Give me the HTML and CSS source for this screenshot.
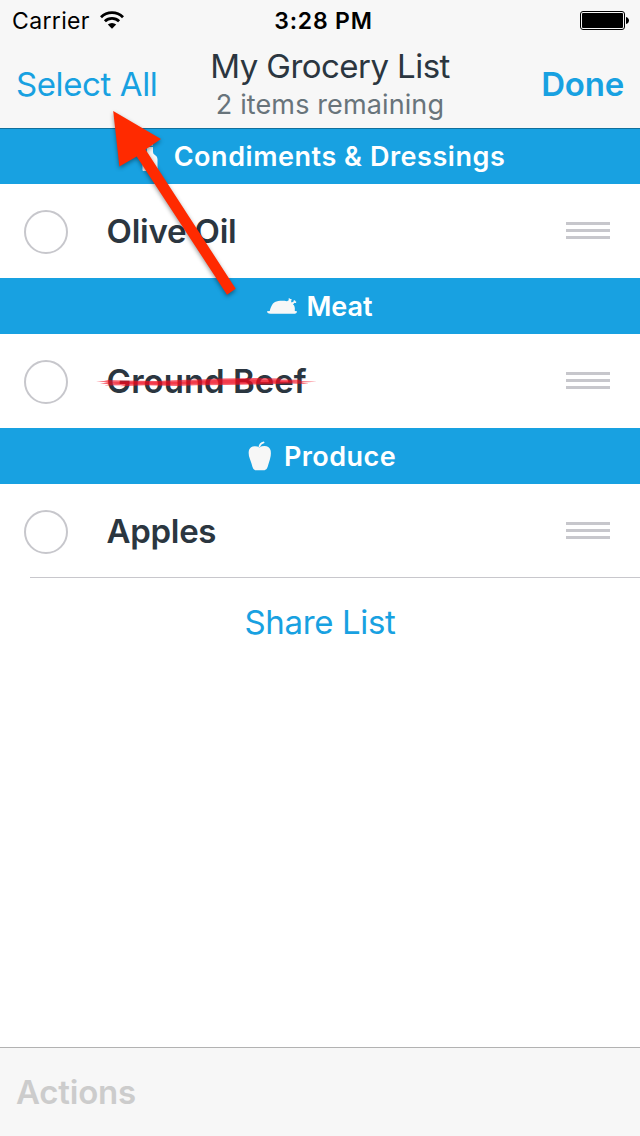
FILE: index.html
```html
<!DOCTYPE html>
<html lang="en">
<head>
    <meta charset="UTF-8">
    <meta name="viewport" content="width=device-width, initial-scale=1.0">
    <title>My Grocery List</title>
    <link rel="stylesheet" href="styles.css">
</head>
<body>
    <div class="app">
        <header class="header">
            <div class="status-bar">
                <div class="carrier">
                    <span>Carrier</span>
                    <svg class="wifi" viewBox="0 0 24 18">
                        <path d="M1 6.2a15.6 15.6 0 0 1 22 0" />
                        <path d="M4.9 10.3a10.1 10.1 0 0 1 14.2 0" />
                        <path class="dot" d="M7.8 13.6a6 6 0 0 1 8.4 0L12 17.8z" />
                    </svg>
                </div>
                <div class="time">3:28 PM</div>
                <svg class="battery" viewBox="0 0 50 20">
                    <rect class="shell" x="0.5" y="0.5" width="44" height="18" rx="2.5" />
                    <rect x="2" y="2" width="41" height="15" rx="1" />
                    <path d="M46 6c4 1 4 6 0 7z" />
                </svg>
            </div>
            <nav class="nav-bar">
                <a class="nav-link select-all">Select All</a>
                <div class="titles">
                    <h1>My Grocery List</h1>
                    <p>2 items remaining</p>
                </div>
                <a class="nav-link done">Done</a>
            </nav>
        </header>

        <main class="list">
            <h2 class="section condiments">
                <svg class="icon" viewBox="0 0 30 30">
                    <path d="M12 1h6v3.500h-6z" />
                    <path d="M12 6h6v5q0 2 2 3 2.500 1.500 2.500 4v11q0 1-1 1h-13q-1 0-1-1V18q0-2.500 2.500-4 2-1 2-3z" />
                </svg>
                <span>Condiments &amp; Dressings</span>
            </h2>
            <div class="row">
                <span class="check"></span>
                <span class="name olive">Olive Oil</span>
                <span class="handle"><i></i><i></i><i></i></span>
            </div>

            <h2 class="section meat">
                <svg class="icon-meat" viewBox="0 0 30 17">
                    <path d="M0 13.2L2.8 13C3.5 10 5 5.500 8 4c3-1.300 8-1.500 12-.7L22 2q-1.300-1.200 0-1.800 1 0 1.300.9 1.200-.4 1.500.6 0 .8-1 .9l.8 2 2-1q-.4-1.500.8-1.400 1 .1 1 1 1.300.3.8 1.300-.7 1-1.700.2L26 6.400q2.300 1 1.800 6.600l2.200.2q0 2-2 2.600H3.500Q0 15.500 0 13.200z" />
                </svg>
                <span>Meat</span>
            </h2>
            <div class="row">
                <span class="check"></span>
                <span class="name beef">Ground Beef
                    <svg class="strike" viewBox="0 0 222 16" preserveAspectRatio="none">
                        <path d="M0 6.500L12 6.300 8 5.500 28 6 60 6.300 84 5.500 110 5 124 4.300 160 4 186 4.300 184 5.200 207 5.300 203 6.300 221 7 205 7.500 213 8.700 192 8.300 170 9.200 130 9.500 100 9.800 80 10.300 50 9.700 24 10.600 28 9.700 8 10 14 9 4 8.300 12 7.500z" />
                        <path class="dark" d="M14 7.500L40 6.800 84 7 120 5.500 150 5 200 6.500 186 7.600 150 8.500 100 8.600 70 9.400 40 9 20 8.600z" />
                    </svg>
                </span>
                <span class="handle"><i></i><i></i><i></i></span>
            </div>

            <h2 class="section produce">
                <svg class="icon" viewBox="-4 0 30 30">
                    <path d="M10.500 6.300Q10.800 1.800 15.700.5q1 .2.7 1.500-3.600 1-4.200 4z" />
                    <path d="M1 9Q2.500 5 7 5.200q2.500.1 4.500 1.300 2-1.400 5-1.400 4.500 0 6 4 1 4-.6 9.400-1.100 3.500-2.300 7.500-.8 3-3 3.200l-4 .1-5.500-.1q-1.800-.3-2.600-3.200-1-4-2.600-8Q0 13 1 9z" />
                </svg>
                <span>Produce</span>
            </h2>
            <div class="row last">
                <span class="check"></span>
                <span class="name apples">Apples</span>
                <span class="handle"><i></i><i></i><i></i></span>
            </div>
            <a class="share">Share List</a>
        </main>

        <footer class="toolbar">
            <span class="actions">Actions</span>
        </footer>

        <!-- arrow pointing at Select All -->
        <svg class="arrow" viewBox="0 0 150 210">
            <path d="M23.200 11L71 39 55.500 49.500 145.700 188.700 137 194.700 46.700 56.500 29.400 66.400z" />
        </svg>
    </div>
</body>
</html>
```

FILE: styles.css
```css
* {
    margin: 0;
    padding: 0;
    box-sizing: border-box;
}

body {
    font-family: Inter, Roboto, sans-serif;
    background: #fff;
    color: #2b3640;
}

.app {
    position: relative;
    width: 640px;
    height: 1136px;
    display: flex;
    flex-direction: column;
    overflow: hidden;
}

.header {
    position: relative;
    z-index: 1;
    height: 128px;
    background: #f7f7f7;
    box-shadow: 0 1px rgba(0, 0, 0, 0.3);
}

.status-bar {
    display: grid;
    grid-template-columns: 1fr auto 1fr;
    align-items: center;
    height: 40px;
    padding: 2px 10px 0 12px;
    font-size: 23px;
    color: #000;
}

.carrier {
    display: flex;
    align-items: center;
    gap: 10px;
    letter-spacing: 0.35px;
}

.wifi {
    width: 24px;
    height: 18px;
    margin-top: -2px;
    fill: none;
    stroke: #000;
    stroke-width: 2.8;
}

.wifi .dot {
    fill: #000;
    stroke: none;
}

.time {
    padding-left: 5px;
    font-weight: 600;
    letter-spacing: 0.8px;
}

.battery {
    justify-self: end;
    width: 50px;
    height: 20px;
}

.battery .shell {
    fill: none;
    stroke: #000;
}

.nav-bar {
    display: grid;
    grid-template-columns: 1fr auto 1fr;
    align-items: center;
    height: 87px;
    padding: 0 16px;
}

.nav-link {
    font-size: 33px;
    color: #18a1e1;
}

.select-all {
    letter-spacing: -0.4px;
}

.done {
    justify-self: end;
    font-weight: 600;
    letter-spacing: -0.2px;
}

.titles {
    padding: 2px 0 0 20px;
    text-align: center;
}

h1 {
    font-size: 33px;
    font-weight: 400;
    line-height: 40px;
    letter-spacing: -0.55px;
}

.titles p {
    font-size: 27px;
    line-height: 37px;
    letter-spacing: 0.12px;
    color: #68747b;
}

.list {
    flex: 1;
    display: flex;
    flex-direction: column;
}

.section {
    display: flex;
    align-items: center;
    justify-content: center;
    gap: 9px;
    height: 56px;
    background: #18a1e1;
    color: #fff;
    font-size: 27px;
    font-weight: 600;
}

.condiments {
    letter-spacing: 0.54px;
}

.produce {
    gap: 10px;
    letter-spacing: 0.45px;
}

.section svg {
    fill: #f7f7f7;
}

.icon {
    width: 30px;
    height: 30px;
}

.icon-meat {
    width: 30px;
    height: 17px;
}

.row {
    display: flex;
    align-items: center;
    height: 94px;
    padding: 0 30px 0 24px;
    border-bottom: 1px solid #fff;
}

.check {
    width: 44px;
    height: 44px;
    margin: 2px 38.5px 0 0;
    border: 2px solid #c7c7cc;
    border-radius: 50%;
}

.name {
    position: relative;
    font-size: 33px;
    font-weight: 600;
}

.olive {
    letter-spacing: -0.2px;
}

.apples {
    letter-spacing: -0.3px;
}

.strike {
    position: absolute;
    left: -11px;
    top: 12px;
    width: 222px;
    height: 20px;
    fill: rgba(245, 15, 35, 0.65);
}

.strike .dark {
    fill: rgba(235, 0, 20, 0.4);
}

.handle {
    margin-left: auto;
    display: flex;
    flex-direction: column;
    gap: 4px;
}

.handle i {
    width: 44px;
    height: 3px;
    background: #c7c7cc;
}

.last {
    border-bottom: 1px solid #c8c7cc;
    margin-left: 30px;
    padding-left: 0;
}

.last .check {
    margin-left: -6px;
}

.share {
    margin-top: 24px;
    text-align: center;
    font-size: 33px;
    letter-spacing: -0.35px;
    color: #18a1e1;
}

.toolbar {
    display: flex;
    align-items: center;
    height: 89px;
    padding: 0 16px;
    background: #f7f7f7;
    border-top: 1px solid #b2b2b2;
}

.actions {
    font-size: 33px;
    font-weight: 600;
    letter-spacing: -0.2px;
    color: #ccc;
}

.arrow {
    position: absolute;
    z-index: 2;
    left: 90px;
    top: 100px;
    width: 150px;
    height: 210px;
    fill: #ff2a00;
    filter: drop-shadow(0 2px 2px rgba(0, 0, 0, 0.4));
}
```
